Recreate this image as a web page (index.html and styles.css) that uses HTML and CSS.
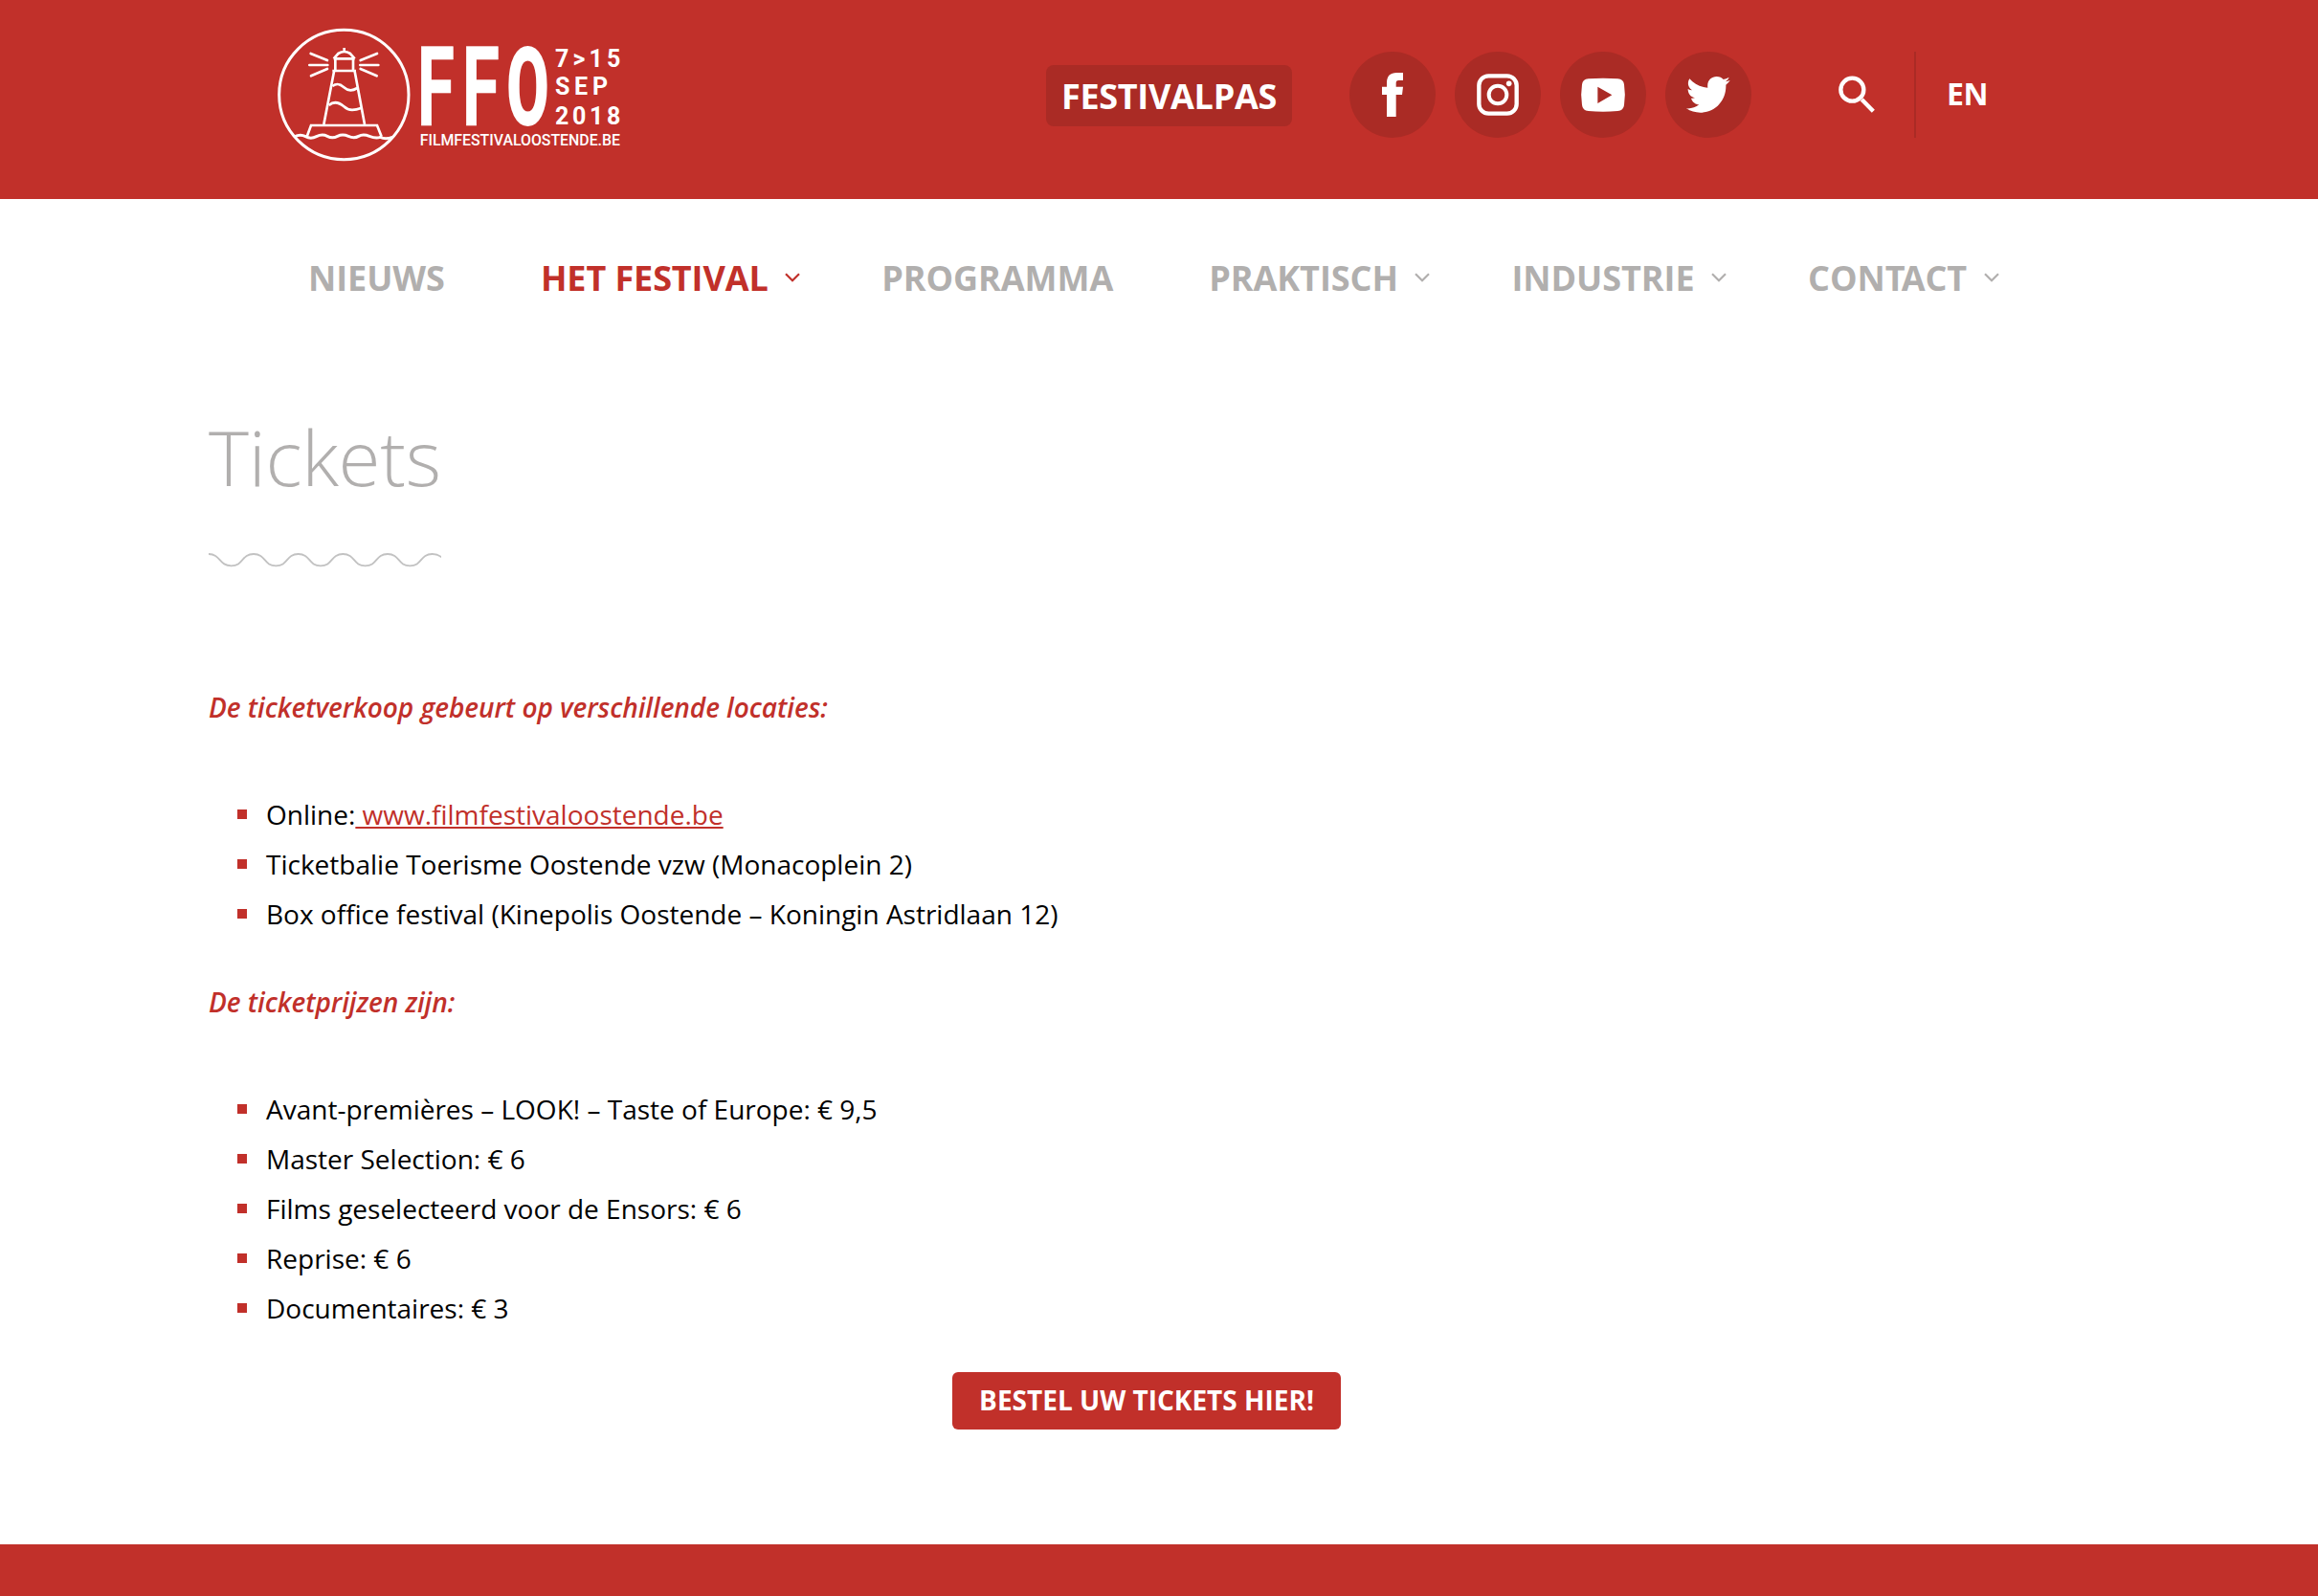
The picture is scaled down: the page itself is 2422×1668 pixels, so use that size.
FILE: index.html
```html
<!DOCTYPE html>
<html lang="nl">
<head>
<meta charset="utf-8">
<title>Tickets - Filmfestival Oostende</title>
<link rel="stylesheet" href="styles.css">
</head>
<body>
<header class="header">
  <a class="logo">
    <svg width="360" height="140" viewBox="60 57 1080 420">
      <g class="logo-lines">
        <circle cx="268" cy="267" r="203" stroke-width="9"/>
        <path d="M269 120V132M236 154L250 138Q269 126 288 138L302 154M236 154H302M241 154V192M297 154V192M232 192H306M237 194L205 360M302 194L333 360" stroke-width="8"/>
        <path d="M232 240C248 229 258 235 268 244C281 256 297 254 310 246M221 300C237 286 254 292 268 304C284 319 302 316 324 308" stroke-width="8"/>
        <path d="M152 398L165 363H372L386 398" stroke-width="8"/>
        <path d="M114 398Q132 389 148 398T182 398T216 397T248 397T282 397T314 397T348 397T382 400Q398 408 420 400" stroke-width="9"/>
        <path d="M164 138L216 159M160 174H217M165 208L216 186M372 138L320 159M376 174H319M371 208L320 186" stroke-width="8" stroke-linecap="round"/>
      </g>
      <g class="logo-name">
        <text transform="translate(497 362) scale(.62 1)">F</text>
        <text transform="translate(638 362) scale(.62 1)">F</text>
        <text class="logo-o" transform="translate(778 362) scale(.56 1)">O</text>
      </g>
      <g class="logo-date">
        <text x="930" y="180" textLength="205">7&gt;15</text>
        <text x="930" y="268" textLength="165">SEP</text>
        <text x="930" y="360" textLength="205">2018</text>
      </g>
      <text class="logo-site" x="506" y="425" textLength="628" lengthAdjust="spacingAndGlyphs">FILMFESTIVALOOSTENDE.BE</text>
    </svg>
  </a>
  <div class="tools">
    <a class="pass">FESTIVALPAS</a>
    <div class="social">
      <a class="round"><svg viewBox="30 42 270 270"><path d="M147 246V177H132V152H147V140C147 118 158 108 178 108H198V132H184C178 132 176 135 176 141V152H198L195 177H176V246Z"/></svg></a>
      <a class="round"><svg viewBox="360 42 270 270"><rect class="outline" x="436" y="118" width="118" height="118" rx="30" stroke-width="13"/><circle class="outline" cx="495" cy="177" r="28" stroke-width="12"/><circle cx="530" cy="142" r="8.5"/></svg></a>
      <a class="round"><svg viewBox="690 42 270 270"><path fill-rule="evenodd" d="M779 127Q825 123 871 127Q889 128 891 145Q896 177 891 209Q889 227 871 228Q825 232 779 228Q761 227 759 209Q754 177 759 145Q761 128 779 127ZM808 152V204L853 178Z"/></svg></a>
      <a class="round"><svg viewBox="1020 42 270 270"><path d="M1096 127C1110 144 1130 153 1153 155C1150 133 1164 120 1181 120C1190 120 1197 124 1202 129Q1211 127 1220 122Q1217 131 1209 136Q1216 135 1223 132Q1218 140 1210 146C1212 191 1180 233 1130 233C1114 233 1099 229 1086 220C1102 221 1115 217 1126 208C1114 207 1104 199 1101 188Q1107 189 1113 187C1099 184 1091 173 1091 159Q1097 163 1104 163C1091 154 1088 139 1096 127Z"/></svg></a>
    </div>
    <svg class="search" viewBox="240 118 120 120"><circle cx="286" cy="162" r="36" stroke-width="13"/><path d="M316 193L352 230" stroke-width="13"/></svg>
    <a class="lang">EN</a>
  </div>
</header>
<nav class="nav">
  <a class="item plain">NIEUWS</a>
  <a class="item active">HET FESTIVAL<svg class="chev" viewBox="0 0 16 10"><path d="M1 1.2L8 8.2L15 1.2"/></svg></a>
  <a class="item plain">PROGRAMMA</a>
  <a class="item">PRAKTISCH<svg class="chev" viewBox="0 0 16 10"><path d="M1 1.2L8 8.2L15 1.2"/></svg></a>
  <a class="item">INDUSTRIE<svg class="chev" viewBox="0 0 16 10"><path d="M1 1.2L8 8.2L15 1.2"/></svg></a>
  <a class="item"><span>CON<span class="kern">T</span>ACT</span><svg class="chev" viewBox="0 0 16 10"><path d="M1 1.2L8 8.2L15 1.2"/></svg></a>
</nav>
<main class="content">
  <h1 class="title">Tickets</h1>
  <svg class="wave" viewBox="54 468 729 54"><path d="M54 477C92 477 86 514 125 514C164 514 156 477 195 477S226 514 265 514S296 477 335 477S366 514 405 514S436 477 475 477S506 514 545 514S576 477 615 477S646 514 685 514S716 477 755 477Q772 477 784 487"/></svg>
  <h2 class="sub">De ticketverkoop gebeurt op verschillende locaties:</h2>
  <ul class="list">
    <li>Online:<a class="link"> www.filmfestivaloostende.be</a></li>
    <li>Ticketbalie Toerisme Oostende vzw (Monacoplein 2)</li>
    <li>Box office festival (Kinepolis Oostende – Koningin Astridlaan 12)</li>
  </ul>
  <h2 class="sub">De ticketprijzen zijn:</h2>
  <ul class="list">
    <li>Avant-premières – LOOK! – Taste of Europe: € 9,5</li>
    <li>Master Selection: € 6</li>
    <li>Films geselecteerd voor de Ensors: € 6</li>
    <li>Reprise: € 6</li>
    <li>Documentaires: € 3</li>
  </ul>
  <a class="order">BESTEL UW TICKETS HIER!</a>
</main>
<footer class="footer"></footer>
</body>
</html>
```
FILE: styles.css
```css
* { box-sizing: border-box; }
body {
  margin: 0;
  height: 1668px;
  display: flex;
  flex-direction: column;
  overflow: hidden;
  background: #fff;
  color: #000;
  font-family: "Open Sans", "Noto Sans", sans-serif;
  font-size: 28px;
}
.header {
  height: 208px;
  flex: none;
  background: #c1302a;
  padding: 29px 347px 0 290px;
  display: flex;
  justify-content: space-between;
  align-items: flex-start;
  color: #fff;
}
.logo svg { display: block; overflow: visible; }
.logo-lines { fill: none; stroke: #fff; }
.logo text { fill: #fff; }
.logo-name { font: 700 345px Roboto, sans-serif; stroke: #fff; stroke-width: 2; }
.logo-o { font-weight: 900; stroke: none; }
.logo-date { font: 700 75px Roboto, sans-serif; }
.logo-site { font: 500 47px Roboto, sans-serif; }
.tools { display: flex; align-items: center; height: 90px; margin-top: 25px; }
.pass {
  width: 257px;
  height: 64px;
  margin: 2px 60px 0 0;
  border-radius: 8px;
  background: #aa2b25;
  font-size: 36px;
  font-weight: 700;
  line-height: 66px;
  letter-spacing: -.3px;
  text-align: center;
}
.social { display: flex; gap: 20px; }
.round { width: 90px; height: 90px; border-radius: 50%; background: #aa2b25; }
.round svg { display: block; width: 90px; height: 90px; fill: #fff; }
.round .outline { fill: none; stroke: #fff; }
.search { width: 40px; height: 40px; margin: 0 40px 0 90px; fill: none; stroke: #fff; }
.lang {
  height: 90px;
  width: 75px;
  padding-left: 32px;
  border-left: 2px solid #aa2b25;
  font-size: 32px;
  font-weight: 700;
  line-height: 88px;
  letter-spacing: -.5px;
}
.nav {
  height: 164px;
  flex: none;
  padding-left: 322px;
  display: flex;
  font-size: 36px;
  font-weight: 700;
  line-height: 50px;
  letter-spacing: -.05px;
  color: #b1afae;
}
.item { display: flex; align-items: center; height: 164px; padding-top: 2px; margin-right: 85px; white-space: nowrap; }
.item.plain { margin-right: 100px; }
.item.active { color: #c1302a; letter-spacing: -.1px; }
.kern { letter-spacing: -4px; }
.chev { width: 16px; height: 10px; margin: 0 0 2px 17.5px; fill: none; stroke: currentColor; stroke-width: 2.2; }
.content { height: 1242px; flex: none; padding: 50px 218px 0; display: flex; flex-direction: column; }
.title { margin: 0; font-size: 80px; font-weight: 300; line-height: 110px; letter-spacing: -.3px; color: #b1afae; }
.wave { width: 243px; height: 18px; margin: 44px 0 119px; fill: none; stroke: #c2c2c2; stroke-width: 5.5; }
.sub { margin: 0 0 60px; font-size: 28px; font-weight: 600; font-style: italic; line-height: 52px; letter-spacing: -.06px; color: #c1302a; }
.list { margin: 0 0 40px; padding: 0; list-style: none; line-height: 52px; }
.list li { display: flex; align-items: center; white-space: pre; }
.list li::before { content: ""; width: 10px; height: 10px; margin: 0 20px 0 30px; background: #c1302a; }
.link { color: #c1302a; text-decoration: underline; }
.order {
  width: 406px;
  height: 60px;
  margin: 1px 0 0 777px;
  border-radius: 6px;
  background: #c1302a;
  color: #fff;
  font-weight: 700;
  line-height: 58px;
  text-align: center;
}
.footer { flex: 1; background: #c1302a; }
```
